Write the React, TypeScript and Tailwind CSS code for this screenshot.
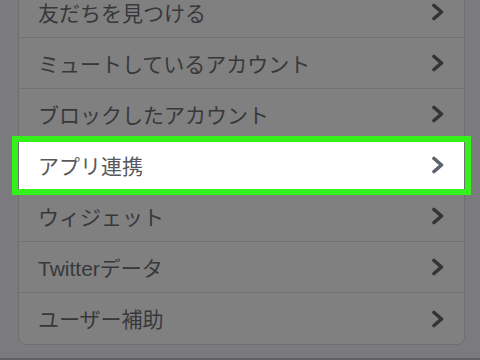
import React from "react";

const items = [
  "友だちを見つける",
  "ミュートしているアカウント",
  "ブロックしたアカウント",
  "アプリ連携",
  "ウィジェット",
  "Twitterデータ",
  "ユーザー補助",
];

function Chevron({ color }: { color: string }) {
  return (
    <svg width="14" height="18" viewBox="0 0 14 18" fill="none">
      <polyline
        points="3,2.5 10.5,9 3,15.5"
        stroke={color}
        strokeWidth="3.6"
        strokeLinecap="round"
        strokeLinejoin="round"
      />
    </svg>
  );
}

export default function App() {
  return (
    <div
      className="relative h-[360px] w-[480px] overflow-hidden bg-[#7b7b7f]"
      style={{ fontFamily: '"Liberation Sans", "Noto Sans CJK JP", sans-serif' }}
    >
      <div className="ml-[18px] mt-[-14px] w-[447px] rounded-b-[8px] border border-[#6f6f73] bg-[#808080]">
        {items.map((t, i) => {
          const active = i === 3;
          const last = i === items.length - 1;
          return (
            <div
              key={t}
              className={`relative flex h-[51px] items-center justify-between pl-[19px] pr-[19px] ${
                last ? "" : "border-b border-[#727276]"
              } ${active ? "bg-white" : ""}`}
            >
              {active && (
                <div className="pointer-events-none absolute left-[-7px] right-[-7px] top-[-4px] bottom-[-5px] border-[6px] border-[#36f01c]" />
              )}
              <span
                className={`pt-[2px] text-[21px] leading-none ${
                  active ? "text-[#59595c]" : "text-[#38383b]"
                }`}
              >
                {t}
              </span>
              <Chevron color={active ? "#5c636d" : "#333437"} />
            </div>
          );
        })}
      </div>
      <div className="absolute bottom-0 left-0 h-[2px] w-full bg-[#626266]" />
    </div>
  );
}
